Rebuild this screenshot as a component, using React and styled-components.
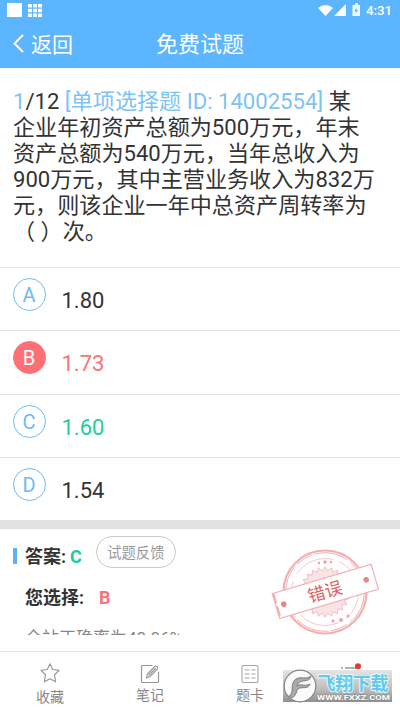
import React from "react";
import styled, { createGlobalStyle } from "styled-components";

const options = [
   { key: "A", value: "1.80" },
   { key: "B", value: "1.73", state: "wrong" },
   { key: "C", value: "1.60", state: "right" },
   { key: "D", value: "1.54" },
];

const lines = ["企业年初资产总额为500万元，年末", "资产总额为540万元，当年总收入为", "900万元，其中主营业务收入为832万", "元，则该企业一年中总资产周转率为", "（ ）次。"];

const stateColors = { wrong: "#f87377", right: "#22cd9b" };

const burst = Array.from({ length: 48 }, (_, i) => {
   const r = i % 2 ? 28 : 33;
   const a = (i * Math.PI) / 24;
   return `${(r * Math.cos(a)).toFixed(1)},${(r * Math.sin(a)).toFixed(1)}`;
}).join(" ");

const StatusIcons = () => (
   <svg width="44" height="14" viewBox="0 0 44 14" fill="#fff">
      <path d="M0 5Q7.500-1 15 5L7.500 13z" />
      <path d="M16 13L28 1V13z" />
      <path fillRule="evenodd" d="M34.500 2h2.500V.5h3V2h2v11h-7.500zM39 4l-3 4.200h2l-.7 3 3-4.200h-2z" />
   </svg>
);

const WrongStamp = () => (
   <svg width="112" height="100" viewBox="0 0 112 100">
      <g transform="translate(54 47)" fill="none" stroke="#f3afb1">
         <circle r="41.500" strokeWidth="2.200" />
         <circle r="39.300" strokeWidth="1" strokeDasharray="35 3 18 2" />
         <circle r="33.500" strokeWidth=".7" strokeDasharray="30 8 42 6" />
         <g transform="scale(.76)">
            <polygon points={burst} fill="#fae3e4" strokeWidth="1" />
         </g>
         <g fill="#ef9da0" stroke="none">
            <circle cx="-6" cy="-29" r="1.200" />
            <circle cx="0" cy="-30" r="1.700" />
            <circle cx="6" cy="-30" r="1.200" />
            <circle cx="8" cy="29" r="1.500" />
            <circle cx="16" cy="28" r="1.900" />
            <circle cx="23" cy="24" r="1.500" />
         </g>
         <g transform="rotate(-16.500)">
            <rect x="-51" y="-13.500" width="103" height="26" fill="#fff" strokeWidth="1.200" />
            <path d="M-50-13V12" strokeWidth="2" strokeDasharray="10 3" />
            <circle cx="-43" cy="0" r="2.800" fill="#e9868a" stroke="none" />
            <circle cx="43" cy="0" r="2.800" fill="#e9868a" stroke="none" />
            <text x="0" y="6" textAnchor="middle" fill="#e15f66" stroke="none" fontSize="17.500" fontFamily="Roboto, 'Noto Sans CJK SC', sans-serif">
               错误
            </text>
         </g>
      </g>
   </svg>
);

const StarIcon = () => (
   <svg width="22" height="22" viewBox="0 0 22 22" fill="none" stroke="#999" strokeWidth="1.200" strokeLinejoin="round">
      <path d="M11 1.800L13.700 7.500L20 8.400L15.500 12.800L16.600 19.800L11 16.700L5.400 19.800L6.500 12.800L2 8.400L8.300 7.500z" />
   </svg>
);

const NoteIcon = () => (
   <svg width="22" height="22" viewBox="0 0 22 22" fill="none" stroke="#999" strokeWidth="1.200" strokeLinejoin="round" strokeLinecap="round">
      <path d="M13 3.500H3.500Q2.500 3.500 2.500 4.500V19.500Q2.500 20.500 3.500 20.500H18.500Q19.500 20.500 19.500 19.500V10" />
      <path d="M7.500 16L8.500 12L15.800 4.500Q17 3.500 18.200 4.700Q19.300 6 18.300 7.100L11 14.500z M10 13L16.500 6.500" />
   </svg>
);

const CardIcon = () => (
   <svg width="22" height="22" viewBox="0 0 22 22" fill="none" stroke="#a5a5a5" strokeWidth="1.100">
      <rect x="3" y="3.500" width="16" height="17" rx="1.500" />
      <path d="M5.500 8h5M12.500 8h4M5.500 12h5M12.500 12h4M5.500 16h5M12.500 16h4" />
   </svg>
);

const MoreIcon = () => (
   <svg width="22" height="22" viewBox="0 0 22 22">
      <path d="M2 6h2M6 6h11" stroke="#999" strokeWidth="1.300" />
      <circle cx="19" cy="4.300" r="3" fill="#e43b35" />
   </svg>
);

const SiteMark = () => (
   <Mark>
      <svg width="110" height="34" viewBox="0 0 110 34">
         <defs>
            <linearGradient id="strip" x2="0" y2="1">
               <stop offset="0" stopColor="#e4e4e4" />
               <stop offset=".6" stopColor="#bdbdbd" />
               <stop offset="1" stopColor="#8f8f8f" />
            </linearGradient>
         </defs>
         <rect y="1" width="109" height="32" fill="url(#strip)" />
         <circle cx="17" cy="17" r="15.800" fill="#fafafa" stroke="#858585" strokeWidth="1.200" />
         <path
            d="M6 27C12 24 6 15 13 10C18 7 23 11 28 7C27 13 21 11 17 13C15 14 14 16 14 17C18 14 22 18 27 15C25 21 19 17 15 20C13 22 14 26 9 29z"
            fill="#aaa"
            stroke="#777"
            strokeWidth=".9"
         />
         <g fontWeight="700" fontFamily="Roboto, 'Noto Sans CJK SC', sans-serif" strokeLinejoin="round" paintOrder="stroke">
            <text x="34.500" y="20.500" fontSize="18" textLength="71" fill="#62c8ea" stroke="#e9fbff" strokeWidth="1.800">
               飞翔下载
            </text>
            <text x="34" y="30.500" fontSize="8" textLength="73" lengthAdjust="spacingAndGlyphs" fill="#fff" stroke="#888" strokeWidth=".8">
               WWW.FXXZ.COM
            </text>
         </g>
      </svg>
   </Mark>
);

const App = () => {
   return (
      <Screen>
         <GlobalStyle />
         <StatusBar>
            <Notices>
               <Square />
               <svg width="14" height="13" viewBox="0 0 14 13" fill="#fff">
                  <path d="M0 0h4v3.500H0zM5 0h4v3.500H5zM10 0h4v3.500h-4zM0 4.700h4v3.500H0zM5 4.700h4v3.500H5zM10 4.700h4v3.500h-4zM0 9.400h4v3.500H0zM5 9.400h4v3.500H5zM10 9.400h4v3.500h-4z" />
               </svg>
            </Notices>
            <StatusIcons />
            <Clock>4:31</Clock>
         </StatusBar>
         <Header>
            <Back>
               <svg width="11" height="19" viewBox="0 0 11 19" fill="none" stroke="#fff" strokeWidth="2">
                  <path d="M10 1L1.500 9.500L10 18" />
               </svg>
               返回
            </Back>
            <Title>免费试题</Title>
         </Header>
         <Content>
            <Question>
               <Line>
                  <Blue>1</Blue>/12 <Blue>[单项选择题 ID: 14002554]</Blue> 某
               </Line>
               {lines.map((line) => (
                  <Line key={line}>{line}</Line>
               ))}
            </Question>
            {options.map(({ key, value, state }) => (
               <Option key={key}>
                  <Letter $filled={state === "wrong"}>{key}</Letter>
                  <Value $color={stateColors[state]}>{value}</Value>
               </Option>
            ))}
            <Answer>
               <AnswerRow>
                  <Marker />
                  <Label>答案:</Label>
                  <Result $color={stateColors.right}>C</Result>
                  <Feedback>试题反馈</Feedback>
               </AnswerRow>
               <ChoiceRow>
                  <Label>您选择:</Label>
                  <Result $color={stateColors.wrong}>B</Result>
               </ChoiceRow>
               <Rate>全站正确率为48.06%</Rate>
               <Stamp>
                  <WrongStamp />
               </Stamp>
            </Answer>
         </Content>
         <TabBar>
            <Tab $low>
               <StarIcon />
               收藏
            </Tab>
            <Tab>
               <NoteIcon />
               笔记
            </Tab>
            <Tab>
               <CardIcon />
               题卡
            </Tab>
            <Tab>
               <MoreIcon />
               更多
            </Tab>
            <SiteMark />
         </TabBar>
      </Screen>
   );
};

export default App;

const GlobalStyle = createGlobalStyle`
   * {
      box-sizing: border-box;
   }

   body {
      margin: 0;
      background: #fff;
   }

   svg {
      display: block;
      flex-shrink: 0;
   }
`;

const Screen = styled.div`
   width: 400px;
   height: 711px;
   display: flex;
   flex-direction: column;
   overflow: hidden;
   color: #333;
   font-family: Roboto, "Noto Sans CJK SC", sans-serif;
`;

const StatusBar = styled.div`
   height: 20px;
   flex-shrink: 0;
   display: flex;
   align-items: center;
   padding: 0 8px 0 7px;
   background-color: #5bb5ff;
`;

const Notices = styled.div`
   display: flex;
   align-items: center;
   gap: 6px;
   margin-right: auto;
`;

const Square = styled.div`
   width: 15px;
   height: 14px;
   background-color: white;
`;

const Clock = styled.span`
   width: 26px;
   margin-left: 4px;
   color: white;
   font-size: 13.300px;
   font-weight: 500;
   line-height: 21px;
`;

const Header = styled.header`
   height: 48px;
   flex-shrink: 0;
   display: grid;
   grid-template-columns: 1fr auto 1fr;
   align-items: center;
   padding: 2px 13px 0;
   background-color: #5bb5ff;
   color: white;
`;

const Back = styled.div`
   display: flex;
   align-items: center;
   gap: 7px;
   font-size: 21px;
   line-height: 46px;

   svg {
      margin-top: -3px;
   }
`;

const Title = styled.h1`
   margin: 0;
   font-size: 22px;
   font-weight: 400;
   line-height: 46px;
`;

const Content = styled.main`
   height: 567px;
   flex-shrink: 0;
   overflow: hidden;
`;

const Question = styled.div`
   height: 199px;
   padding: 20px 0 0 13px;
   font-size: 22.1px;
`;

const Line = styled.div`
   height: 26px;
   line-height: 26px;
   white-space: nowrap;
`;

const Blue = styled.span`
   color: #7dc3f5;
`;

const Option = styled.div`
   height: 63.300px;
   display: flex;
   align-items: flex-start;
   gap: 17px;
   padding: 10px 13px 0 12.500px;
   border-top: 1px solid #e0e0e0;
`;

const Letter = styled.div`
   width: 33px;
   height: 33px;
   border: 1px solid ${(props) => (props.$filled ? "#fd7075" : "#6fbaf2")};
   border-radius: 50%;
   background-color: ${(props) => (props.$filled ? "#fd7075" : "white")};
   color: ${(props) => (props.$filled ? "white" : "#6fbaf2")};
   font-size: 20px;
   line-height: 32px;
   text-align: center;
`;

const Value = styled.div`
   padding-top: 9px;
   margin-left: -1px;
   color: ${(props) => props.$color || "#333"};
   font-size: 22px;
   line-height: 28px;
`;

const Answer = styled.section`
   position: relative;
   border-top: 9px solid #e1e1e1;
`;

const AnswerRow = styled.div`
   display: flex;
   height: 48px;
   padding: 7px 0 0 13px;
`;

const Marker = styled.div`
   width: 4px;
   height: 16px;
   margin: 12px 8px 0 0;
   background-color: #5bb5f5;
`;

const Label = styled.div`
   font-size: 18px;
   font-weight: 700;
   line-height: 42px;
`;

const Result = styled.div`
   margin-left: 4px;
   color: ${(props) => props.$color};
   font-size: 18px;
   font-weight: 700;
   line-height: 42px;
`;

const Feedback = styled.button`
   width: 80px;
   height: 32px;
   margin-left: 14px;
   padding: 0 0 2px;
   border: 1px solid #ccc;
   border-radius: 16px;
   background: none;
   color: #999;
   font-family: inherit;
   font-size: 14.300px;
`;

const ChoiceRow = styled.div`
   display: flex;
   height: 42px;
   padding-left: 25px;

   ${Result} {
      margin-left: 15px;
   }
`;

const Rate = styled.div`
   height: 18px;
   margin: 7px 0 0 25px;
   overflow: hidden;
   color: #888;
   font-size: 17px;
   line-height: 24px;
`;

const Stamp = styled.div`
   position: absolute;
   top: 16px;
   right: 17px;
`;

const TabBar = styled.nav`
   position: relative;
   height: 60px;
   flex-shrink: 0;
   display: flex;
   margin-top: 16px;
   border-top: 1px solid #e5e5e5;
`;

const Tab = styled.div`
   flex: 1;
   display: flex;
   flex-direction: column;
   align-items: center;
   padding-top: 10px;
   color: #888;
   font-size: 14px;
   line-height: ${(props) => (props.$low ? "26px" : "23px")};
`;

const Mark = styled.div`
   position: absolute;
   top: 17px;
   left: 283px;
`;
